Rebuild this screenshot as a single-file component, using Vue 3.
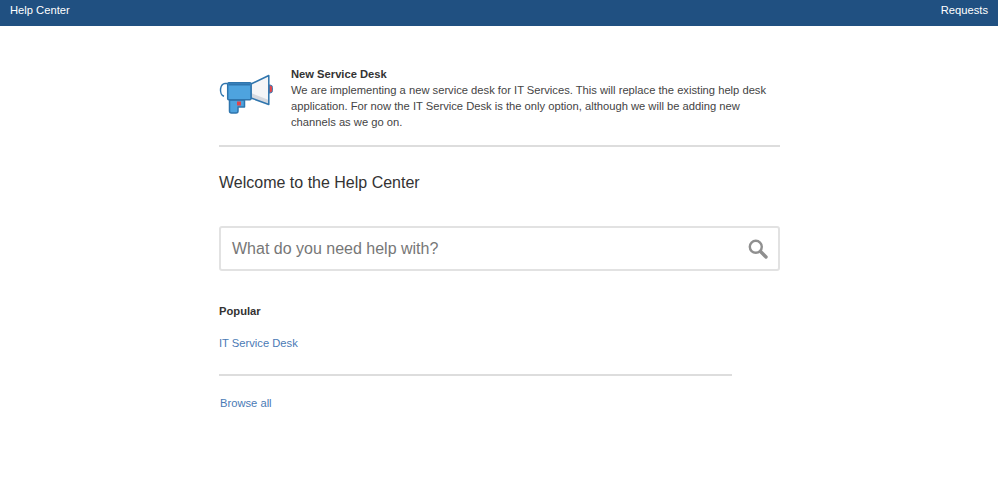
<script setup>
const notice = [
  'We are implementing a new service desk for IT Services. This will replace the existing help desk',
  'application. For now the IT Service Desk is the only option, although we will be adding new',
  'channels as we go on.'
]
</script>

<template>
  <div class="page">
    <header class="topbar">
      <span>Help Center</span>
      <span>Requests</span>
    </header>
    <main class="content">
      <section class="notice">
        <svg class="horn" width="56" height="42" viewBox="219 73 56 42">
          <path d="M269 85h1a2.500 2.500 0 0 1 2.500 2.500v3a2.500 2.500 0 0 1-2.500 2.500h-1z" fill="#e0474c" stroke="#3f7fb5" stroke-width="1"/>
          <path d="M227 83.500h-1.500a4.500 6.500 0 0 0-1.500 12.800" fill="none" stroke="#2f75ad" stroke-width="1.500"/>
          <path d="M229.500 100h15v7h-6.500v4a2 2 0 0 1-2 2h-4.500a2 2 0 0 1-2-2z" fill="#4ea3de" stroke="#2f75ad" stroke-width="1.500" stroke-linejoin="round"/>
          <rect x="237" y="101.500" width="4" height="4" fill="#e0474c"/>
          <path d="M251 84 L268.800 75.500 V104.500 L251 98z" fill="#f4f5f7"/>
          <path d="M251 93 L268.800 100 V104.500 L251 98z" fill="#d5d9e0"/>
          <path d="M251 84 L268.800 75.500 V104.500 L251 98z" fill="none" stroke="#2f75ad" stroke-width="1.500" stroke-linejoin="round"/>
          <rect x="227.700" y="82.800" width="23.300" height="17" rx="1" fill="#4ea3de" stroke="#2f75ad" stroke-width="1.500"/>
          <rect x="228.500" y="83.500" width="21.500" height="2" fill="#2f75ad"/>
        </svg>
        <div class="notice-text">
          <strong>New Service Desk</strong>
          <p v-for="line in notice" :key="line">{{ line }}</p>
        </div>
      </section>
      <h1>Welcome to the Help Center</h1>
      <div class="search">
        <span>What do you need help with?</span>
        <svg width="20" height="20" viewBox="0 0 20 20">
          <circle cx="7.800" cy="7.800" r="6" fill="none" stroke="#8f8f8f" stroke-width="2.400"/>
          <path d="M12.500 12.500 18 18" stroke="#8f8f8f" stroke-width="3.400" stroke-linecap="round"/>
        </svg>
      </div>
      <h2>Popular</h2>
      <a class="link desk">IT Service Desk</a>
      <hr class="rule" />
      <a class="link browse">Browse all</a>
    </main>
  </div>
</template>

<style>
html, body { margin: 0; background: #fff; }
</style>

<style scoped>
.page {
  width: 998px;
  height: 498px;
  overflow: hidden;
  font-family: "Liberation Sans", Arial, sans-serif;
  font-size: 11.2px;
  color: #444;
}
.topbar {
  box-sizing: border-box;
  height: 26px;
  padding: 2px 10px 0;
  display: flex;
  justify-content: space-between;
  align-items: flex-start;
  line-height: 16px;
  background: #205081;
  color: #fff;
}
.content {
  width: 561px;
  margin-left: 219px;
}
.notice {
  box-sizing: border-box;
  height: 121px;
  padding-top: 40px;
  display: flex;
  border-bottom: 2px solid #ddd;
}
.horn { margin-top: 7px; flex: none; }
.notice-text { margin-left: 16px; line-height: 16px; }
.notice-text strong { display: block; color: #333; }
.notice-text p { margin: 0; white-space: nowrap; }
h1 {
  margin: 26px 0 0;
  font-size: 16px;
  font-weight: 400;
  line-height: 20px;
  color: #333;
}
.search {
  box-sizing: border-box;
  height: 45px;
  margin-top: 33px;
  padding: 0 10px 0 11px;
  display: flex;
  align-items: center;
  justify-content: space-between;
  border: 2px solid #e2e2e2;
  border-radius: 3px;
  font-size: 16px;
  color: #777;
}
h2 {
  margin: 33px 0 0;
  font-size: 11.2px;
  line-height: 14px;
  font-weight: 700;
  color: #333;
}
.link { display: block; color: #4a7ab5; line-height: 14px; }
.desk { margin-top: 18px; }
.rule {
  width: 513px;
  height: 2px;
  margin: 24px 0 0;
  border: 0;
  background: #ddd;
}
.browse { margin: 20px 0 0 1px; }
</style>
